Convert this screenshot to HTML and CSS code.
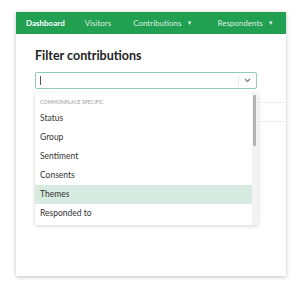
FILE: index.html
```html
<!DOCTYPE html>
<html>
<head>
	<title>Filter contributions</title>
	<link rel="stylesheet" href="styles.css">
</head>
<body>
	<div class="card">
		<nav class="nav">
			<a>Dashboard</a>
			<a>Visitors</a>
			<a>Contributions <span class="caret">&#9660;</span></a>
			<a>Respondents <span class="caret">&#9660;</span></a>
		</nav>
		<div class="content">
			<h1 class="title">Filter contributions</h1>
			<div class="select">
				<div class="select-box">
					<span class="cursor"></span>
					<span class="sep"></span>
					<svg class="chev" width="7" height="5" viewBox="0 0 7 5"><path d="M1 1l2.5 2.5L6 1" fill="none" stroke="#777" stroke-width="1.1"/></svg>
				</div>
				<div class="menu">
					<div class="menu-list">
						<div class="group">COMMONPLACE SPECIFIC</div>
						<div class="opt">Status</div>
						<div class="opt">Group</div>
						<div class="opt">Sentiment</div>
						<div class="opt">Consents</div>
						<div class="opt hover">Themes</div>
						<div class="opt">Responded to</div>
					</div>
					<div class="scroll"><div class="thumb"></div></div>
				</div>
			</div>
			<div class="table">
				<div class="row"></div>
				<div class="row"></div>
			</div>
		</div>
	</div>
</body>
</html>
```

FILE: styles.css
```css
body{
	margin:0;
	padding:12px 12px 9px 16px;
	background-color:#fff;
	font-family:Lato,"Open Sans",sans-serif;
}
.card{
	width:270px;
	height:264px;
	background-color:#fff;
	box-shadow:0 1px 4px rgba(0,0,0,0.25);
}
.nav{
	display:flex;
	align-items:center;
	height:22px;
	padding:0 0 0 10px;
	background-color:#21a052;
	font-size:8px;
}
.nav a{
	color:rgba(255,255,255,0.85);
	white-space:nowrap;
}
.nav a:nth-child(1){
	color:#fff;
	font-weight:bold;
	margin-right:20px;
}
.nav a:nth-child(2){
	margin-right:22px;
}
.nav a:nth-child(3){
	margin-right:25px;
}
.caret{
	font-size:6px;
	margin-left:3px;
	vertical-align:1px;
}
.content{
	padding:14px 0 0 19px;
}
.title{
	margin:0 0 9px 0;
	font-size:12.5px;
	font-weight:bold;
	color:#222;
}
.select{
	position:relative;
	width:222px;
}
.select-box{
	display:flex;
	align-items:center;
	height:17px;
	border:1px solid #8fcfad;
	border-radius:2px;
	box-sizing:border-box;
}
.cursor{
	width:1px;
	height:9px;
	margin-left:4px;
	background-color:#555;
}
.sep{
	margin-left:auto;
	width:1px;
	height:10px;
	background-color:#e6e6e6;
}
.chev{
	margin:0 5px 0 5px;
}
.menu{
	position:absolute;
	top:21px;
	left:0;
	width:223px;
	height:132px;
	display:flex;
	background-color:#fff;
	box-shadow:0 1px 4px rgba(0,0,0,0.18);
	border-radius:2px;
	z-index:2;
}
.menu-list{
	flex:1;
}
.group{
	padding:6px 5px 4px 5px;
	font-size:5px;
	letter-spacing:0.1px;
	color:#999;
}
.opt{
	height:19px;
	line-height:19px;
	padding-left:5px;
	font-size:8.5px;
	color:#333;
}
.opt.hover{
	background-color:#d8ebe0;
}
.scroll{
	width:6px;
	background-color:#f3f3f3;
	padding:2px 1px 0 1px;
	box-sizing:border-box;
}
.thumb{
	width:3px;
	height:51px;
	background-color:#b4b4b4;
	border-radius:1px;
}
.table{
	margin-left:222px;
}
.row{
	height:18px;
	border-bottom:1px solid #eee;
}
.row:first-child{
	height:13px;
}
```
